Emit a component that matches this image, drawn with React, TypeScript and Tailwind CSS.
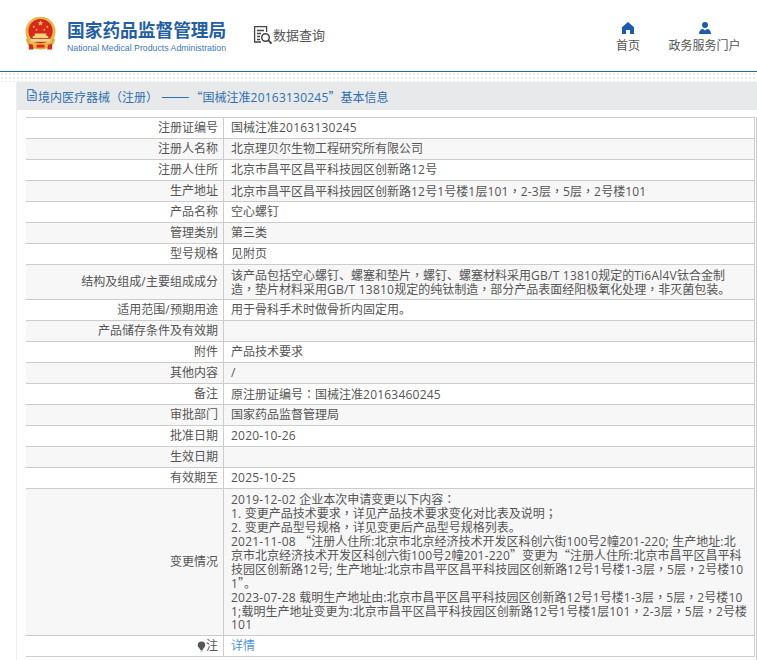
const FONT = "font-['Open_Sans','Noto_Sans_CJK_SC',sans-serif]";

// latin runs sit a little wider in the original, and some punctuation is centred in its cell
function T({ children }: { children: string }) {
  const parts = children.split(/([，；：、]|[“”]+|[0-9A-Za-z\-/.:; ]+)/).filter(Boolean);
  return (
    <>
      {parts.map((part, i) => {
        if (/^[，；：]$/.test(part)) {
          return (
            <span key={i} className="font-['Noto_Sans_CJK_TC',sans-serif]">
              {part}
            </span>
          );
        }
        if (/^[“”、]+$/.test(part)) {
          return (
            <span key={i} className="font-['Noto_Sans_CJK_SC',sans-serif]">
              {part}
            </span>
          );
        }
        if (/^[0-9A-Za-z\-/.:; ]+$/.test(part)) {
          return (
            <span key={i} className="tracking-[0.22px]">
              {part}
            </span>
          );
        }
        return part;
      })}
    </>
  );
}

type Row = { label: React.ReactNode; value: string | string[] | React.ReactNode };

const ROWS: Row[] = [
  { label: "注册证编号", value: "国械注准20163130245" },
  { label: "注册人名称", value: "北京理贝尔生物工程研究所有限公司" },
  { label: "注册人住所", value: "北京市昌平区昌平科技园区创新路12号" },
  { label: "生产地址", value: "北京市昌平区昌平科技园区创新路12号1号楼1层101，2-3层，5层，2号楼101" },
  { label: "产品名称", value: "空心螺钉" },
  { label: "管理类别", value: "第三类" },
  { label: "型号规格", value: "见附页" },
  {
    label: "结构及组成/主要组成成分",
    value: [
      "该产品包括空心螺钉、螺塞和垫片，螺钉、螺塞材料采用GB/T 13810规定的Ti6Al4V钛合金制",
      "造，垫片材料采用GB/T 13810规定的纯钛制造，部分产品表面经阳极氧化处理，非灭菌包装。",
    ],
  },
  { label: "适用范围/预期用途", value: "用于骨科手术时做骨折内固定用。" },
  { label: "产品储存条件及有效期", value: "" },
  { label: "附件", value: "产品技术要求" },
  { label: "其他内容", value: "/" },
  { label: "备注", value: "原注册证编号：国械注准20163460245" },
  { label: "审批部门", value: "国家药品监督管理局" },
  { label: "批准日期", value: "2020-10-26" },
  { label: "生效日期", value: "" },
  { label: "有效期至", value: "2025-10-25" },
  {
    label: "变更情况",
    value: [
      "2019-12-02 企业本次申请变更以下内容：",
      "1. 变更产品技术要求，详见产品技术要求变化对比表及说明；",
      "2. 变更产品型号规格，详见变更后产品型号规格列表。",
      "2021-11-08 “注册人住所:北京市北京经济技术开发区科创六街100号2幢201-220; 生产地址:北",
      "京市北京经济技术开发区科创六街100号2幢201-220”变更为“注册人住所:北京市昌平区昌平科",
      "技园区创新路12号; 生产地址:北京市昌平区昌平科技园区创新路12号1号楼1-3层，5层，2号楼10",
      "1”。",
      "2023-07-28 载明生产地址由:北京市昌平区昌平科技园区创新路12号1号楼1-3层，5层，2号楼10",
      "1;载明生产地址变更为:北京市昌平区昌平科技园区创新路12号1号楼1层101，2-3层，5层，2号楼",
      "101",
    ],
  },
  {
    label: (
      <span className="inline-flex items-center">
        <svg viewBox="0 0 10 12" className="h-[11px] w-[9px]">
          <path d="M5 .5a4.200 4.200 0 0 1 4.200 4.200c0 2.200-2.400 3.400-3 5.300H3.800c-.6-1.900-3-3.100-3-5.300A4.200 4.200 0 0 1 5 .5z" fill="#555" />
          <rect x="3.8" y="10.4" width="2.4" height="1.2" fill="#999" />
        </svg>
        注
      </span>
    ),
    value: <span className="text-[#4d94dc]">详情</span>,
  },
];

function Emblem() {
  return (
    <svg viewBox="0 0 34 34" className="h-[34px] w-[33px]">
      <circle cx="17" cy="14.5" r="15.5" fill="#e6b64a" />
      <circle cx="17" cy="14" r="12.5" fill="#d8271c" />
      <path d="M17 2.600l.8 2.200 2.300.1-1.800 1.400.6 2.200-1.900-1.300-1.900 1.300.6-2.200-1.800-1.400 2.300-.1z" fill="#f1c84e" />
      <circle cx="10" cy="9.5" r="1" fill="#f1c84e" />
      <circle cx="24" cy="9.5" r="1" fill="#f1c84e" />
      <circle cx="13" cy="12.5" r="1" fill="#f1c84e" />
      <circle cx="21" cy="12.5" r="1" fill="#f1c84e" />
      <path d="M9 19h16v2H9zM11 16.500h12V19H11z" fill="#f2d27a" />
      <path d="M7 22h20v3H7z" fill="#f0d98f" />
      <path d="M4 20c1 6 5 9 13 9s12-3 13-9l2 3c-1 5-5 10-15 10S3 28 2 23z" fill="#e2ad3e" />
      <path d="M5 27l4 1 1 5H5zM29 27l-4 1-1 5h5z" fill="#d8271c" />
      <path d="M13 28h8v3h-8z" fill="#d8271c" />
    </svg>
  );
}

function SearchDocIcon() {
  return (
    <svg viewBox="0 0 20 20" className="h-[20px] w-[20px]" fill="none" stroke="#444" strokeWidth="1.3">
      <path d="M8 17H1.600V1.600h12V7" />
      <path d="M4 5.500h7M4 8.500h4M4 11.500h3M4 14.500h3" />
      <circle cx="12.5" cy="12.5" r="3.8" strokeWidth="1.5" />
      <path d="M15.400 15.400l3.200 3.200" strokeWidth="2" />
    </svg>
  );
}

function NavHome() {
  return (
    <svg viewBox="0 0 12 12" className="h-[12px] w-[12px]" fill="#1b5bb0">
      <path d="M6 0L12 5.200V12H8V8H4v4H0V5.200z" />
    </svg>
  );
}

function NavUser() {
  return (
    <svg viewBox="0 0 12 12" className="h-[12px] w-[12px]" fill="#1b5bb0">
      <circle cx="6" cy="3" r="3" />
      <path d="M0 12c0-3 1.500-5 4-5l2 1.500L8 7c2.500 0 4 2 4 5z" />
    </svg>
  );
}

function FileIcon() {
  return (
    <svg viewBox="0 0 10 12" className="h-[12px] w-[10px] shrink-0" fill="none" stroke="#2f6fae" strokeWidth="1">
      <path d="M.8.6h5.400l3 3v7.800H.8zM6 .8v3h3M2.500 6.500h5M2.500 8.800h5" />
    </svg>
  );
}

function Line({ text }: { text: string }) {
  return (
    <div className="h-[14px]">
      <T>{text}</T>
    </div>
  );
}

function renderValue(value: Row["value"]) {
  if (typeof value === "string") return <Line text={value} />;
  if (Array.isArray(value)) return (value as string[]).map((line) => <Line key={line} text={line} />);
  return <div className="h-[14px]">{value}</div>;
}

export default function App() {
  return (
    <div className={`h-[660px] w-[757px] overflow-hidden bg-white text-[12px] leading-[14px] text-[#555] ${FONT}`}>
      <header className="flex h-[72px] items-start border-b border-[#1f69a5]">
        <div className="ml-[24px] mt-[17px]">
          <Emblem />
        </div>
        <div className="ml-[10px] mt-[20px] w-[160px]">
          <div className="whitespace-nowrap text-[17.7px] font-bold leading-[20px] text-[#245ea3]">国家药品监督管理局</div>
          <div className="mt-[3px] whitespace-nowrap font-['Liberation_Sans',sans-serif] text-[8.75px] leading-[11px] text-[#3f78b5]">
            National Medical Products Administration
          </div>
        </div>
        <div className="ml-[26px] mt-[25px] flex items-center text-[#555]">
          <SearchDocIcon />
          <span className="text-[13px] leading-[20px]">数据查询</span>
        </div>
        <nav className="ml-auto mr-[17px] mt-[22px] flex gap-[29px] text-[#555]">
          <div className="flex w-[24px] flex-col items-center gap-[5px]">
            <NavHome />
            <span className="whitespace-nowrap">首页</span>
          </div>
          <div className="flex w-[71px] flex-col items-center gap-[5px]">
            <NavUser />
            <span className="whitespace-nowrap">政务服务门户</span>
          </div>
        </nav>
      </header>
      <div className="h-[10px] bg-[radial-gradient(#e8eced_1px,transparent_1px)] bg-[length:4px_4px]" />

      <main className="ml-[16px] h-full border-l border-[#eee]">
        <div className="flex h-[28px] items-center bg-[#e8e9eb] pb-[2px] pl-[10px] text-[#2f6fae]">
          <FileIcon />
          <span className="ml-[1px] h-[14px] whitespace-nowrap">
            <T>境内医疗器械</T>
            <span className="font-['Noto_Sans_CJK_TC',sans-serif]">（注册）</span>
            <span className="ml-[3px] font-['Noto_Sans_CJK_SC',sans-serif] text-[17px] leading-[14px]">——</span>
            <span className="ml-[1px]">
              <T>“国械注准20163130245”基本信息</T>
            </span>
          </span>
        </div>
        <div className="ml-[9px] mt-[7px] h-full border-r border-[#ccc] pr-[1px]">
          <div className="border-r border-t border-[#ccc]">
            {ROWS.map((row, i) => (
              <div key={i} className={`flex border-b border-[#ccc] ${i % 2 === 1 ? "bg-[#f7f7f7]" : "bg-white"}`}>
                <div className="flex w-[198px] shrink-0 items-center justify-end border-r border-[#ccc] pr-[5px]">
                  <div className="h-[14px]">{typeof row.label === "string" ? <T>{row.label}</T> : row.label}</div>
                </div>
                <div className="flex-1 whitespace-nowrap py-[3px] pl-[7px]">{renderValue(row.value)}</div>
              </div>
            ))}
          </div>
        </div>
      </main>
    </div>
  );
}
